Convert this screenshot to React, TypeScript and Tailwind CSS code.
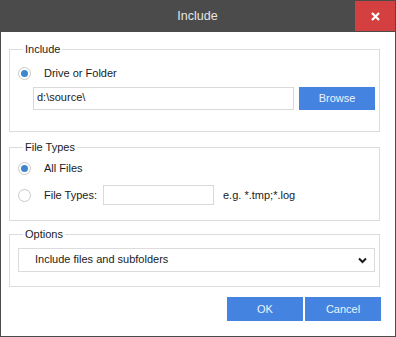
import React from "react";

function Radio({ checked }: { checked?: boolean }) {
  return (
    <span className="flex h-[13px] w-[13px] shrink-0 items-center justify-center rounded-full border border-[#c9c9c9] bg-white">
      {checked && <span className="h-[7px] w-[7px] rounded-full bg-[#3e86cd]" />}
    </span>
  );
}

export default function App() {
  return (
    <div
      className="flex h-[337px] w-[396px] flex-col border-x border-b border-[#4b4b4b] bg-white text-[11px] text-[#1b1b1b]"
      style={{ fontFamily: '"Liberation Sans", Arial, sans-serif' }}
    >
      <div className="flex h-[32px] shrink-0 -mx-px bg-[#4b4b4b]">
        <div className="flex flex-1 items-center justify-center pl-[40px] text-[12.5px] text-[#e6e6e6]">Include</div>
        <div className="mt-px mb-px mr-px flex w-[40px] items-center justify-center bg-[#d43f3f]">
          <svg width="9" height="9" viewBox="0 0 9 9">
            <path d="M1 1 L8 8 M8 1 L1 8" stroke="white" strokeWidth="2.2" />
          </svg>
        </div>
      </div>

      <fieldset className="ml-[8px] mt-[10px] w-[371px] border border-[#dcdcdc] pl-[8px] pr-[4px] pb-[21px]">
        <legend className="ml-[5px] px-[2px] leading-[14px]">Include</legend>
        <div className="mt-[11px] flex h-[13px] items-center">
          <Radio checked />
          <span className="ml-[13px]">Drive or Folder</span>
        </div>
        <div className="mt-[7px] ml-[15px] flex h-[23px] gap-[5px]">
          <div className="flex flex-1 items-center border border-[#d9d9d9] pl-[3px] pb-[2px]">d:\source\</div>
          <button className="w-[76px] bg-[#4484e0] text-[#eef3fc]">Browse</button>
        </div>
      </fieldset>

      <fieldset className="ml-[8px] mt-[8px] w-[371px] border border-[#dcdcdc] pl-[8px] pb-[15px]">
        <legend className="ml-[5px] px-[2px] leading-[14px]">File Types</legend>
        <div className="mt-[8px] flex h-[13px] items-center">
          <Radio checked />
          <span className="ml-[13px]">All Files</span>
        </div>
        <div className="mt-[10px] flex h-[20px] items-center">
          <Radio />
          <span className="ml-[13px] w-[59px]">File Types:</span>
          <div className="h-[20px] w-[111px] border border-[#d9d9d9]" />
          <span className="ml-[9px]">e.g. *.tmp;*.log</span>
        </div>
      </fieldset>

      <fieldset className="ml-[8px] mt-[6px] w-[371px] border border-[#dcdcdc] pl-[8px] pr-[4px] pb-[14px]">
        <legend className="ml-[5px] px-[2px] leading-[14px]">Options</legend>
        <div className="mt-[7px] flex h-[24px] items-center border border-[#dcdcdc] pl-[16px] pr-[7px]">
          <span className="flex-1 pb-[1px]">Include files and subfolders</span>
          <svg width="9" height="7" viewBox="0 0 9 7">
            <path d="M1 1.5 L4.5 5 L8 1.5" stroke="#1b1b1b" strokeWidth="2" fill="none" />
          </svg>
        </div>
      </fieldset>

      <div className="mt-[10px] ml-[226px] flex gap-[2px]">
        <button className="h-[24px] w-[76px] bg-[#4484e0] text-[#eef3fc]">OK</button>
        <button className="h-[24px] w-[76px] bg-[#4484e0] text-[#eef3fc]">Cancel</button>
      </div>
    </div>
  );
}
